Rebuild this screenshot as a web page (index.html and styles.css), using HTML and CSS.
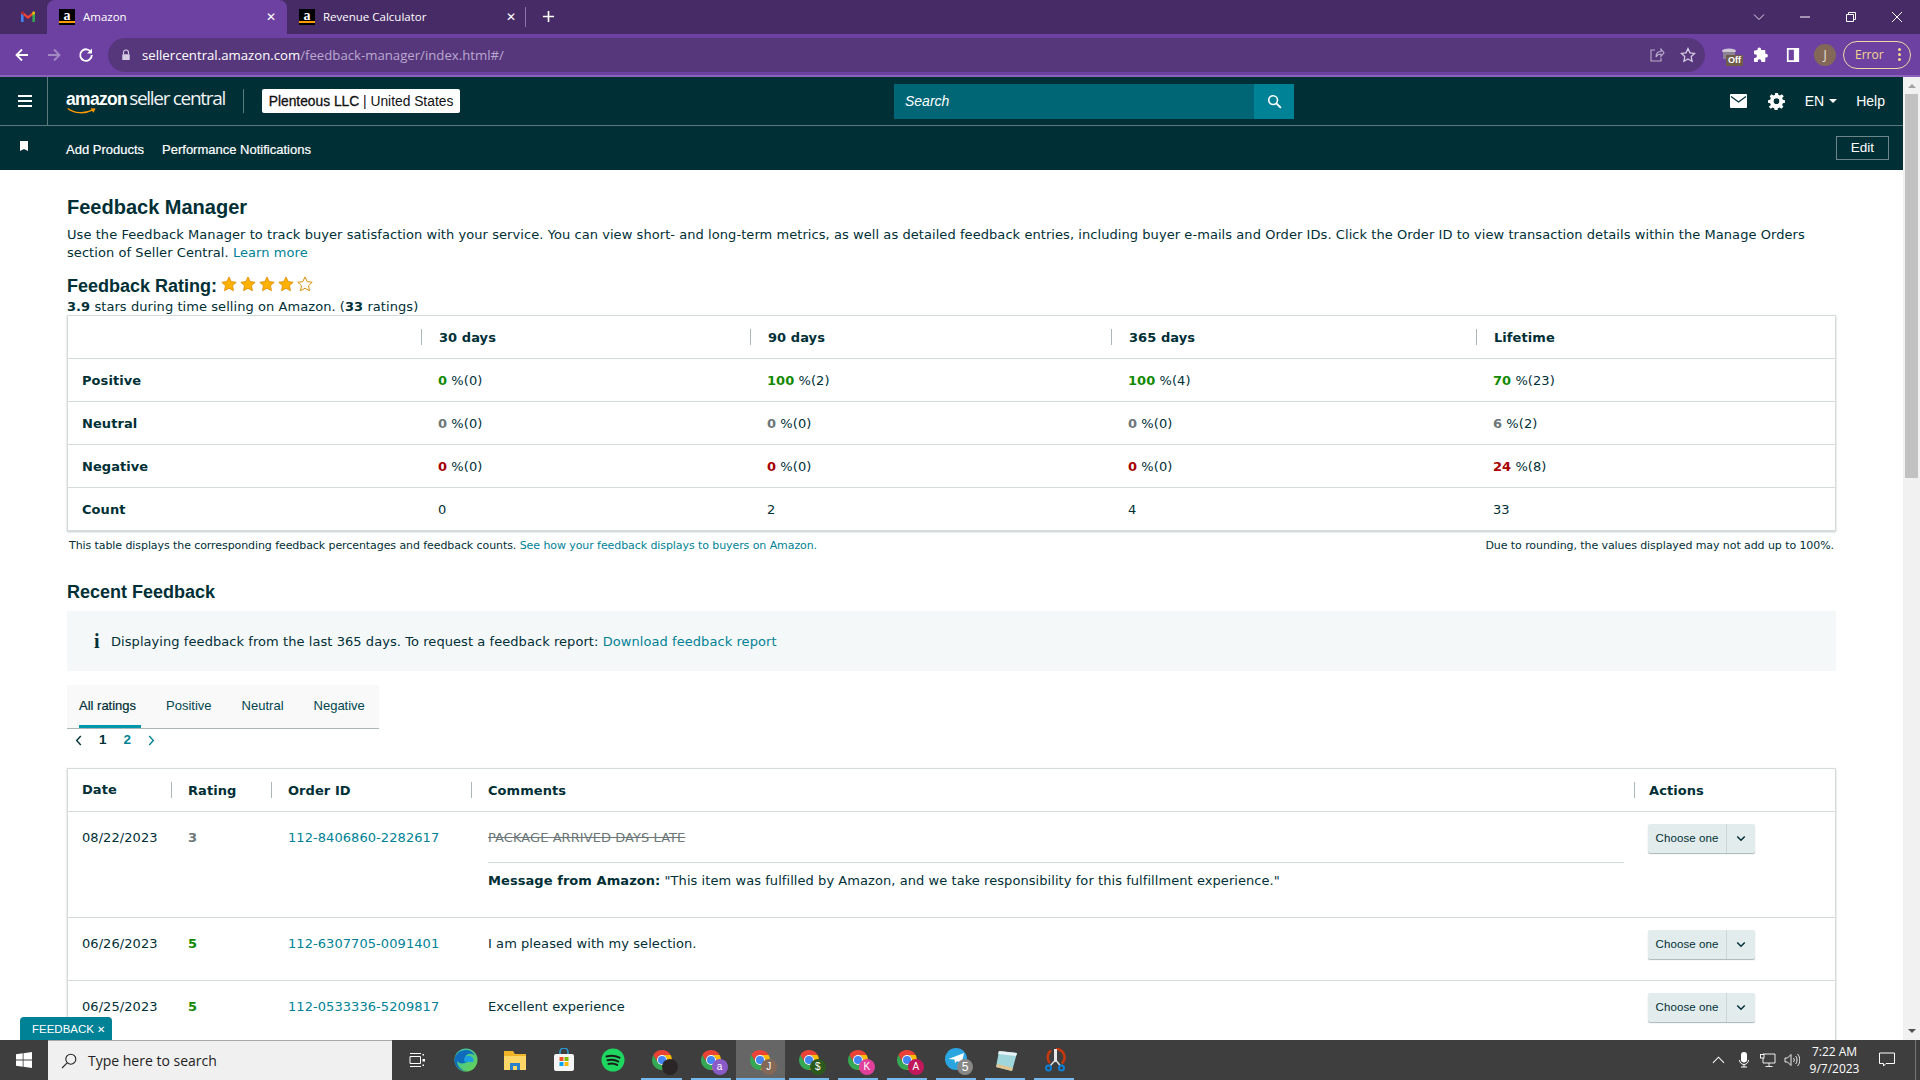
FILE: index.html
```html
<!DOCTYPE html>
<html lang="en">
<head>
<meta charset="utf-8">
<title>Feedback Manager</title>
<link rel="stylesheet" href="styles.css">
</head>
<body>
<svg class="defs" width="0" height="0" aria-hidden="true">
  <symbol id="chrome" viewBox="0 0 24 24">
    <path fill="#ea4335" d="M3.34 7A10 10 0 0 1 20.66 7H12a5 5 0 0 0-4.33 7.5z"/>
    <path fill="#fbbc04" d="M20.66 7A10 10 0 0 1 12 22l4.33-7.5A5 5 0 0 0 12 7z"/>
    <path fill="#34a853" d="M12 22A10 10 0 0 1 3.34 7l4.33 7.5a5 5 0 0 0 8.66 0z"/>
    <circle cx="12" cy="12" r="5" fill="#fff"/>
    <circle cx="12" cy="12" r="4" fill="#4285f4"/>
  </symbol>
  <symbol id="chev" viewBox="0 0 12 8">
    <path d="M1.5 1.5 6 6l4.500-4.500" fill="none" stroke="#002f36" stroke-width="1.8"/>
  </symbol>
  <symbol id="star" viewBox="0 0 20 20">
    <path d="M10 1.2l2.7 5.8 6.3.8-4.6 4.3 1.2 6.3L10 15.3l-5.600 3.100 1.200-6.300L1 7.800 7.300 7z" fill="#ffb100" stroke="#d98a00" stroke-width="1"/>
  </symbol>
  <symbol id="star-empty" viewBox="0 0 20 20">
    <path d="M10 1.2l2.7 5.8 6.3.8-4.6 4.3 1.2 6.3L10 15.3l-5.600 3.100 1.200-6.300L1 7.800 7.300 7z" fill="#fff" stroke="#d98a00" stroke-width="1.2"/>
  </symbol>
</svg>

<header class="tabstrip">
  <div class="tab-pin">
    <svg class="ico16" viewBox="0 0 16 16"><path fill="#4285f4" d="M1 3.500h2.600V13H1.900A.9.900 0 0 1 1 12.100z"/><path fill="#34a853" d="M12.400 3.500H15v8.600a.9.900 0 0 1-.9.900h-1.700z"/><path fill="#ea4335" d="M3.600 3.500 8 7l4.400-3.500v3L8 10 3.600 6.500z"/><path fill="#c5221f" d="M1 3.500c0-1 1.500-1.400 2.600-.6v3.600L1 4.500z"/><path fill="#fbbc04" d="M15 3.500c0-1-1.500-1.400-2.600-.6v3.600L15 4.500z"/></svg>
  </div>
  <div class="tab tab-active">
    <span class="fav">a</span><span class="tab-title">Amazon</span><span class="tab-x">✕</span>
  </div>
  <div class="tab">
    <span class="fav">a</span><span class="tab-title">Revenue Calculator</span><span class="tab-x">✕</span>
  </div>
  <span class="tab-sep"></span>
  <svg class="newtab" viewBox="0 0 14 14"><path d="M7 1v12M1 7h12" stroke="#fff" stroke-width="1.8"/></svg>
  <div class="win-ctl">
    <svg class="ctl" viewBox="0 0 12 12"><path d="M1 3.500 6 8.500l5-5" fill="none" stroke="#e6dcf0" stroke-width="1"/></svg>
    <svg class="ctl" viewBox="0 0 12 12"><path d="M1 6h10" stroke="#fff" stroke-width="1"/></svg>
    <svg class="ctl" viewBox="0 0 12 12"><path d="M1.500 3.500h7v7h-7zM3.500 3.500v-2h7v7h-2" fill="none" stroke="#fff" stroke-width="1"/></svg>
    <svg class="ctl" viewBox="0 0 12 12"><path d="M1 1l10 10M11 1 1 11" stroke="#fff" stroke-width="1"/></svg>
  </div>
</header>

<div class="toolbar">
  <svg class="nav-ico nav-first" viewBox="0 0 16 16"><path d="M14 8H3M8 2.500 2.500 8 8 13.500" fill="none" stroke="#fff" stroke-width="1.8"/></svg>
  <svg class="nav-ico" viewBox="0 0 16 16"><path d="M2 8h11M8 2.500 13.500 8 8 13.500" fill="none" stroke="#a48ac4" stroke-width="1.8"/></svg>
  <svg class="nav-ico" viewBox="0 0 16 16"><path d="M13.200 5.500A5.800 5.800 0 1 0 13.800 8" fill="none" stroke="#fff" stroke-width="1.8"/><path d="M14 1.500v5H9z" fill="#fff"/></svg>
  <div class="omnibox">
    <svg class="lock" viewBox="0 0 12 14"><path d="M3 6V4a3 3 0 0 1 6 0v2" fill="none" stroke="#d6cbe4" stroke-width="1.3"/><rect x="1.500" y="6" width="9" height="7" rx="1" fill="#d6cbe4"/></svg>
    <span class="url"><span class="url-host">sellercentral.amazon.com</span>/feedback-manager/index.html#/</span>
    <svg class="omni-ico omni-share" viewBox="0 0 16 16"><path d="M6 3H2v11h10v-3M7 10c0-4 2-5.500 5-5.500V2l3 3.800-3 3.700V7C9.500 7 8 8 7 10z" fill="none" stroke="#bcaed0" stroke-width="1.1"/></svg>
    <svg class="omni-ico omni-star" viewBox="0 0 16 16"><path d="M8 1.500l2 4.300 4.600.6-3.400 3.200.9 4.600L8 11.900l-4.100 2.300.9-4.600-3.400-3.200L6 5.800z" fill="none" stroke="#d6cbe4" stroke-width="1.3"/></svg>
  </div>
  <div class="ext ext-cap">
    <svg class="ico16" viewBox="0 0 16 16"><ellipse cx="8" cy="4" rx="7" ry="2.500" fill="#cfc7d8"/><path d="M2 5h12v7H2z" fill="#8c8296"/></svg>
    <span class="off">Off</span>
  </div>
  <svg class="ext ext-puzzle" viewBox="0 0 16 16"><path fill="#fff" d="M5.500 3V2.200a1.800 1.800 0 0 1 3.600 0V3h3.400a.8.800 0 0 1 .8.800v3h.7a1.900 1.900 0 0 1 0 3.800h-.7v3.600a.8.800 0 0 1-.8.800H9.300v-1a1.800 1.800 0 0 0-3.600 0v1H2.800a.8.800 0 0 1-.8-.8v-3.200h1a1.900 1.900 0 0 0 0-3.800H2v-3a.8.800 0 0 1 .8-.8z"/></svg>
  <svg class="ext ext-side" viewBox="0 0 14 16"><path fill="#fff" d="M0 0h14v16H0z"/><path fill="#6e42a0" d="M2 2h6v12H2z"/></svg>
  <span class="avatar">J</span>
  <div class="error-pill"><span>Error</span><span class="dots"></span></div>
</div>

<div class="viewport">
  <main class="page">
    <div class="topbar">
      <div class="burger"><span></span><span></span><span></span></div>
      <div class="brand">
        <span class="brand-az">amazon<svg class="smile" viewBox="0 0 42 9"><path d="M1 1c9 7 24 8 35 2" fill="none" stroke="#ff9900" stroke-width="1.8"/><path d="M33 .5l7 .5-3 6z" fill="#ff9900"/></svg></span>
        <span class="brand-sc">seller central</span>
      </div>
      <span class="brand-sep"></span>
      <div class="acct"><b>Plenteous LLC</b> | United States</div>
      <div class="search">
        <span class="search-input">Search</span>
        <span class="search-btn"><svg viewBox="0 0 16 16"><circle cx="6.500" cy="6.500" r="4.700" fill="none" stroke="#fff" stroke-width="1.7"/><path d="M10 10l4.800 4.800" stroke="#fff" stroke-width="2"/></svg></span>
      </div>
      <div class="top-right">
        <svg class="mail" viewBox="0 0 17 14"><rect width="17" height="14" rx="1" fill="#fff"/><path d="M1 2.500 8.500 8 16 2.500" fill="none" stroke="#002f36" stroke-width="1.3"/></svg>
        <svg class="gear" viewBox="0 0 24 24"><path fill="#fff" fill-rule="evenodd" d="M10 1h4l.6 3 2.300 1 2.600-1.700 2.800 2.800L20 8.700l1 2.300 3 .6v3.800l-3 .6-1 2.300 1.700 2.600-2.800 2.800-2.600-1.700-2.300 1-.6 3h-4l-.6-3-2.300-1-2.600 1.700-2.800-2.800L4 18.300 3 16l-3-.6v-3.800l3-.6 1-2.300L2.300 6.100l2.800-2.800L7.700 5 10 4zM12 9a4 4 0 1 0 0 8 4 4 0 0 0 0-8z" transform="translate(0 -1.500)"/></svg>
        <span class="lang">EN<i class="caret"></i></span>
        <span class="help">Help</span>
      </div>
    </div>
    <nav class="subnav">
      <svg class="bookmark" viewBox="0 0 8 10"><path fill="#fff" d="M0 0h8v10L4 8 0 10z"/></svg>
      <a class="subnav-link">Add Products</a>
      <a class="subnav-link">Performance Notifications</a>
      <span class="edit-btn">Edit</span>
    </nav>

    <div class="content">
      <h1 class="title">Feedback Manager</h1>
      <p class="intro">Use the Feedback Manager to track buyer satisfaction with your service. You can view short- and long-term metrics, as well as detailed feedback entries, including buyer e-mails and Order IDs. Click the Order ID to view transaction details within the Manage Orders section of Seller Central. <a class="link">Learn more</a></p>

      <div class="rating-head">
        <span class="rating-title">Feedback Rating:</span>
        <svg class="star"><use href="#star"/></svg><svg class="star"><use href="#star"/></svg><svg class="star"><use href="#star"/></svg><svg class="star"><use href="#star"/></svg><svg class="star"><use href="#star-empty"/></svg>
      </div>
      <p class="rating-sub"><b>3.9</b> stars during time selling on Amazon. (<b>33</b> ratings)</p>

      <div class="card">
        <table class="grid grid-summary">
          <colgroup><col class="c-label"><col class="c-30"><col class="c-90"><col class="c-365"><col class="c-life"></colgroup>
          <thead>
            <tr><th></th><th><span class="th-in">30 days</span></th><th><span class="th-in">90 days</span></th><th><span class="th-in">365 days</span></th><th><span class="th-in">Lifetime</span></th></tr>
          </thead>
          <tbody>
            <tr><td class="lbl">Positive</td><td><b class="pos">0</b> %(0)</td><td><b class="pos">100</b> %(2)</td><td><b class="pos">100</b> %(4)</td><td><b class="pos">70</b> %(23)</td></tr>
            <tr><td class="lbl">Neutral</td><td><b class="neu">0</b> %(0)</td><td><b class="neu">0</b> %(0)</td><td><b class="neu">0</b> %(0)</td><td><b class="neu">6</b> %(2)</td></tr>
            <tr><td class="lbl">Negative</td><td><b class="neg">0</b> %(0)</td><td><b class="neg">0</b> %(0)</td><td><b class="neg">0</b> %(0)</td><td><b class="neg">24</b> %(8)</td></tr>
            <tr><td class="lbl">Count</td><td>0</td><td>2</td><td>4</td><td>33</td></tr>
          </tbody>
        </table>
      </div>
      <div class="note">
        <span>This table displays the corresponding feedback percentages and feedback counts. <a class="link">See how your feedback displays to buyers on Amazon.</a></span>
        <span>Due to rounding, the values displayed may not add up to 100%.</span>
      </div>

      <h2 class="title recent">Recent Feedback</h2>
      <div class="info">
        <span class="info-i">i</span>
        <span>Displaying feedback from the last 365 days. To request a feedback report: <a class="link">Download feedback report</a></span>
      </div>

      <div class="tabs">
        <span class="rtab rtab-on">All ratings</span>
        <span class="rtab">Positive</span>
        <span class="rtab">Neutral</span>
        <span class="rtab">Negative</span>
      </div>
      <div class="pager">
        <svg class="pg-arrow" viewBox="0 0 7 12"><path d="M6 1 1.500 6 6 11" fill="none" stroke="#002f36" stroke-width="1.5"/></svg>
        <span class="pg-num">1</span>
        <span class="pg-num pg-link">2</span>
        <svg class="pg-arrow" viewBox="0 0 7 12"><path d="M1 1l4.500 5L1 11" fill="none" stroke="#008296" stroke-width="1.5"/></svg>
      </div>

      <div class="card card-recent">
        <table class="grid grid-recent">
          <colgroup><col class="r-date"><col class="r-rate"><col class="r-order"><col class="r-comm"><col class="r-act"></colgroup>
          <thead>
            <tr><th class="first">Date</th><th><span class="th-in">Rating</span></th><th><span class="th-in">Order ID</span></th><th><span class="th-in">Comments</span></th><th><span class="th-in">Actions</span></th></tr>
          </thead>
          <tbody>
            <tr>
              <td class="lead">08/22/2023</td><td class="lead"><b class="neu">3</b></td><td class="lead"><a class="link">112-8406860-2282617</a></td>
              <td class="lead">
                <div class="struck">PACKAGE ARRIVED DAYS LATE</div>
                <div class="amazon-msg"><b>Message from Amazon:</b> "This item was fulfilled by Amazon, and we take responsibility for this fulfillment experience."</div>
              </td>
              <td class="act"><div class="choose"><span class="choose-l">Choose one</span><span class="choose-r"><svg class="chev"><use href="#chev"/></svg></span></div></td>
            </tr>
            <tr>
              <td class="lead">06/26/2023</td><td class="lead"><b class="pos">5</b></td><td class="lead"><a class="link">112-6307705-0091401</a></td><td class="lead">I am pleased with my selection.</td>
              <td class="act"><div class="choose"><span class="choose-l">Choose one</span><span class="choose-r"><svg class="chev"><use href="#chev"/></svg></span></div></td>
            </tr>
            <tr>
              <td class="lead">06/25/2023</td><td class="lead"><b class="pos">5</b></td><td class="lead"><a class="link">112-0533336-5209817</a></td><td class="lead">Excellent experience</td>
              <td class="act"><div class="choose"><span class="choose-l">Choose one</span><span class="choose-r"><svg class="chev"><use href="#chev"/></svg></span></div></td>
            </tr>
          </tbody>
        </table>
      </div>
    </div>
  </main>
  <div class="scrollbar">
    <i class="sb-up"></i>
    <div class="sb-track"><div class="sb-thumb"></div></div>
    <i class="sb-down"></i>
  </div>
  <div class="feedback-tab">FEEDBACK <span class="fb-x">✕</span></div>
</div>

<footer class="taskbar">
  <div class="start"><svg viewBox="0 0 16 16"><path fill="#fff" d="M0 2.300 6.700 1.300V7.600H0zM7.500 1.200 16 0V7.600H7.500zM0 8.400H6.700V14.700L0 13.700zM7.500 8.400H16V16L7.500 14.800z"/></svg></div>
  <div class="tb-search">
    <svg class="tb-mag" viewBox="0 0 16 16"><circle cx="9.800" cy="6.200" r="5" fill="none" stroke="#222" stroke-width="1.1"/><path d="M6.200 9.800 1 15" stroke="#222" stroke-width="1.1"/></svg>
    <span>Type here to search</span>
  </div>
  <div class="tb-item"><svg class="tb-ico tb-view" viewBox="0 0 16 16"><path d="M1 4.500h10.500v7H1zM1 1.500h11M1 14.500h11" fill="none" stroke="#fff" stroke-width="1"/><path d="M13.500 2h1.500v1.500h-1.500zM13.500 7h2.500v2.500h-2.500zM13.500 12.500h1.500V14h-1.500z" fill="#fff"/></svg></div>
  <div class="tb-item"><svg class="tb-ico" viewBox="0 0 24 24"><defs><linearGradient id="eg" x1="0" y1="0" x2="1" y2="1"><stop offset="0" stop-color="#35c1b1"/><stop offset="1" stop-color="#6ad34d"/></linearGradient></defs><circle cx="12" cy="12" r="11.500" fill="url(#eg)"/><path d="M.5 12C1 6 6 2 12 2c4 0 7 2 9 5.500-3-2.500-7-2.500-9 0-1.500 2-1 5 1 6.500-3 2-8 2-10-1 0 4 3 9 9 10C6 23 .5 18.500.5 12z" fill="#0f6cbd"/><path d="M10 12c0-3 3-5 6-4 3 1 4 3 3.500 6h-6c-2 1-3.500-.5-3.500-2z" fill="#1b9de2"/></svg></div>
  <div class="tb-item"><svg class="tb-ico" viewBox="0 0 24 24"><path d="M1 3h9l2 3h11v16H1z" fill="#f0b429"/><path d="M1 8h22v14H1z" fill="#ffd767"/><path d="M7 15h10v7H7z" fill="#2a7fc9"/><path d="M10 18h4v4h-4z" fill="#ffd767"/></svg></div>
  <div class="tb-item"><svg class="tb-ico" viewBox="0 0 24 24"><path d="M8 6V4a4 4 0 0 1 8 0v2" fill="none" stroke="#2aa0e0" stroke-width="1.5"/><rect x="2" y="6" width="20" height="17" rx="2" fill="#f5f5f5"/><path fill="#f25022" d="M7.500 9h4v4h-4z"/><path fill="#7fba00" d="M12.500 9h4v4h-4z"/><path fill="#00a4ef" d="M7.500 14h4v4h-4z"/><path fill="#ffb900" d="M12.500 14h4v4h-4z"/></svg></div>
  <div class="tb-item"><svg class="tb-ico" viewBox="0 0 24 24"><circle cx="12" cy="12" r="11.500" fill="#1ed760"/><path d="M5.500 8.500c4-1.200 9-1 13 1.200M6.500 12.300c3.500-1 7.500-.7 10.800 1.200M7.500 15.900c2.800-.8 6-.5 8.600 1" fill="none" stroke="#1b1b1b" stroke-width="2" stroke-linecap="round"/></svg></div>
  <div class="tb-item tb-open"><svg class="tb-ico"><use href="#chrome"/></svg><span class="badge b-photo"></span></div>
  <div class="tb-item tb-open"><svg class="tb-ico"><use href="#chrome"/></svg><span class="badge b-purple">a</span></div>
  <div class="tb-item tb-open tb-active"><svg class="tb-ico"><use href="#chrome"/></svg><span class="badge b-brown">J</span></div>
  <div class="tb-item tb-open"><svg class="tb-ico"><use href="#chrome"/></svg><span class="badge b-green">$</span></div>
  <div class="tb-item tb-open"><svg class="tb-ico"><use href="#chrome"/></svg><span class="badge b-pink">K</span></div>
  <div class="tb-item tb-open"><svg class="tb-ico"><use href="#chrome"/></svg><span class="badge b-crimson">A</span></div>
  <div class="tb-item tb-open"><svg class="tb-ico tb-tele" viewBox="0 0 24 24"><circle cx="11" cy="11" r="11" fill="#2ba5e0"/><path d="M3.500 11 19 5l-2.500 11-4.500-3-2 2-.5-3.500z" fill="#fff"/></svg><span class="badge b-gray">5</span></div>
  <div class="tb-item tb-open"><svg class="tb-ico" viewBox="0 0 24 24"><path d="M5 3l18 2-5 18-16-4z" fill="#9fd6dc"/><path d="M5 3l18 2-1 3L4 6z" fill="#e8f2f4"/><path d="M2 19l16 4 .8-3L3.500 16z" fill="#e2c48f"/></svg></div>
  <div class="tb-item tb-open"><svg class="tb-ico" viewBox="0 0 24 24"><path d="M13 1a8.500 8.500 0 0 1 6 14.500M8 2.500A8.500 8.500 0 0 0 7 15" fill="none" stroke="#c8380f" stroke-width="2.500"/><path d="M12.500 1v13" stroke="#e8e8e8" stroke-width="3"/><path d="M11.500 13 7 18M13.500 13l4 5" stroke="#ddd" stroke-width="1.5"/><circle cx="5.500" cy="20" r="2.500" fill="none" stroke="#0f80d8" stroke-width="2"/><circle cx="18.500" cy="20" r="2.500" fill="none" stroke="#0f80d8" stroke-width="2"/></svg></div>
  <div class="tray">
    <svg class="tray-ico tray-up" viewBox="0 0 14 8"><path d="M1 7l6-6 6 6" fill="none" stroke="#fff" stroke-width="1.1"/></svg>
    <svg class="tray-ico tray-mic" viewBox="0 0 12 16"><rect x="3" y="0" width="6" height="10.500" rx="3" fill="#fff"/><path d="M1.500 8a4.500 4.500 0 0 0 9 0M6 12.500V15M3 15h6" fill="none" stroke="#fff" stroke-width="1"/></svg>
    <svg class="tray-ico tray-net" viewBox="0 0 16 14"><path d="M3 1h12v9H3zM9 10v3M5.500 13.500h7" fill="none" stroke="#fff" stroke-width=".9"/><rect x="0.500" y="1.500" width="3.500" height="3.500" fill="#3e3e3e" stroke="#fff" stroke-width=".9"/></svg>
    <svg class="tray-ico tray-vol" viewBox="0 0 16 14"><path d="M1 5h2.500L7 1.500v11L3.500 9H1zM9.500 5c1 1 1 3 0 4M11.500 3c2 2 2 6 0 8M13.500 1c3 3 3 9 0 12" fill="none" stroke="#fff" stroke-width=".9"/></svg>
    <div class="clock"><span>7:22 AM</span><span>9/7/2023</span></div>
    <svg class="tray-ico tray-note" viewBox="0 0 16 15"><path d="M.5.500h15v10.500H7L4.500 13.500V11H.5z" fill="none" stroke="#fff" stroke-width="1"/></svg>
    <span class="show-desk"></span>
  </div>
</footer>
</body>
</html>
```
FILE: styles.css
```css
* { box-sizing: border-box; }
html, body { margin: 0; height: 100%; overflow: hidden; }
body {
  width: 1920px; height: 1080px; display: flex; flex-direction: column;
  font-family: "DejaVu Sans", Verdana, sans-serif; font-size: 13px; line-height: 18px; letter-spacing: .065px;
  color: #002f36; background: #fff;
}
.defs { position: absolute; }
.ico16 { width: 16px; height: 16px; display: block; }

/* Browser tab strip */
.tabstrip {
  height: 34px; flex: none; display: flex; align-items: flex-end; background: #472b66; letter-spacing: 0;
  font-family: "Open Sans", sans-serif; font-size: 11.5px; color: #fff;
}
.tab-pin { width: 47px; height: 34px; padding: 9px 0 0 20px; }
.tab { width: 240px; height: 34px; display: flex; align-items: center; padding: 0 11px 0 12px; border-radius: 8px 8px 0 0; }
.tab-active { background: #6d41a1; }
.fav {
  width: 16px; height: 16px; flex: none; background: #000; color: #fff; font: bold 14px/13px "Liberation Serif", serif;
  text-align: center; border-bottom: 2px solid #000; box-shadow: inset 0 -2px 0 #f90; margin-right: 8px;
}
.tab-title { flex: 1; white-space: nowrap; }
.tab-x { font-size: 12px; }
.tab-sep { width: 1px; height: 20px; background: #8d75a8; margin: 0 0 7px -2px; }
.newtab { width: 13px; height: 13px; margin: 0 0 11px 16px; }
.win-ctl { margin-left: auto; display: flex; height: 34px; align-items: center; }
.ctl { width: 12px; height: 12px; margin-right: 34px; }
.ctl:last-child { margin-right: 17px; }

/* Browser toolbar */
.toolbar {
  height: 43px; flex: none; display: flex; align-items: center; background: #6d41a1; letter-spacing: 0;
  border-bottom: 2px solid #8a63b9; padding: 0 9px 0 0; font-family: "Open Sans", sans-serif;
}
.nav-ico { width: 16px; height: 16px; margin-left: 16px; flex: none; }
.nav-first { margin-left: 14px; }
.omnibox {
  margin-left: 14px; width: 1599px; height: 34px; border-radius: 17px; background: #56377b; display: flex; align-items: center;
  padding-left: 13px; padding-right: 9px;
}
.lock { width: 10px; height: 12px; flex: none; }
.url { margin-left: 11px; color: #bba8d2; font-size: 13.2px; white-space: nowrap; flex: 1; }
.url-host { color: #fff; }
.omni-ico { width: 16px; height: 16px; flex: none; }
.omni-star { margin-left: 15px; }
.ext { flex: none; }
.ext-cap { position: relative; margin-left: 16px; width: 16px; height: 16px; }
.off {
  position: absolute; left: 5px; top: 8px; background: #6f5d4a; color: #fff; font-size: 9px; line-height: 11px; font-weight: 700;
  padding: 0 2px; border-radius: 1px; font-family: "Liberation Sans", sans-serif;
}
.ext-puzzle { width: 16px; height: 16px; margin-left: 15px; }
.ext-side { width: 14px; height: 14px; margin-left: 18px; }
.avatar {
  width: 22px; height: 22px; border-radius: 50%; background: #836858; color: #e8e0da; margin-left: 14px; font-size: 12px;
  line-height: 22px; text-align: center; flex: none;
}
.error-pill {
  width: 68px; height: 28px; border: 1px solid #f1d8a2; border-radius: 14px; margin-left: 7px; display: flex; align-items: center;
  padding-left: 11px; color: #f5d98e; font-size: 12px; flex: none;
}
.dots {
  width: 3px; height: 3px; border-radius: 50%; background: #f5d98e; box-shadow: 0 -5px 0 #f5d98e, 0 5px 0 #f5d98e; margin-left: 14px;
}

/* Viewport */
.viewport { position: relative; flex: 1; display: flex; min-height: 0; }
.page { width: 1903px; overflow: hidden; }

.topbar {
  height: 49px; background: #002f36; border-bottom: 1px solid #5b7a7d; display: flex; align-items: center; color: #fff; letter-spacing: 0;
  font-family: "Liberation Sans", Arial, sans-serif;
}
.burger { width: 48px; height: 48px; border-right: 1px solid #5b7a7d; display: flex; flex-direction: column; gap: 3px; padding: 18px 0 0 18px; }
.burger span { width: 14px; height: 2px; background: #fff; }
.brand { margin-left: 18px; width: 159px; display: flex; align-items: baseline; white-space: nowrap; height: 30px; margin-top: -2px; }
.brand-az { position: relative; font: bold 17.5px/26px "Liberation Sans", sans-serif; letter-spacing: -.7px; width: 65px; }
.smile { position: absolute; left: 1px; top: 21px; width: 30px; height: 8px; }
.brand-sc { font: 19px/26px "Open Sans", sans-serif; letter-spacing: -1.3px; color: #f2f2f2; }
.brand-sep { width: 1px; height: 24px; background: #5b7a7d; margin-left: 18px; }
.acct {
  margin-left: 18px; width: 198px; height: 24px; background: #fff; border-radius: 2px; color: #111; font-size: 13.8px; line-height: 25px; text-align: center;
  white-space: nowrap;
}
.acct b { font-weight: 400; -webkit-text-stroke: .3px #111; }
.search { margin-left: 434px; width: 400px; height: 35px; display: flex; background: #006574; }
.search-input { flex: 1; padding-left: 11px; font-style: italic; line-height: 35px; font-size: 14px; color: #fff; }
.search-btn { width: 40px; background: #008296; display: flex; align-items: center; justify-content: center; }
.search-btn svg { width: 15px; height: 15px; }
.top-right { margin-left: auto; display: flex; align-items: center; padding-right: 18px; font-size: 14px; }
.mail { width: 17px; height: 14px; }
.gear { width: 17px; height: 17px; margin-left: 21px; }
.lang { margin-left: 20px; display: flex; align-items: center; }
.caret { width: 0; height: 0; border: 4px solid transparent; border-top-color: #fff; border-bottom: 0; margin-left: 5px; }
.help { margin-left: 19px; }

.subnav {
  height: 44px; background: #002f36; display: flex; align-items: center; color: #fff; padding: 0 14px 0 20px; letter-spacing: 0;
  font-family: "Liberation Sans", Arial, sans-serif; font-size: 13px;
}
.bookmark { width: 8px; height: 10px; margin: -4px 38px 0 0; }
.subnav-link { margin-right: 18px; padding-top: 3px; -webkit-text-stroke: .2px #fff; }
.edit-btn { margin-left: auto; width: 53px; height: 24px; border: 1px solid #6c8689; text-align: center; line-height: 22px; font-size: 13.5px; }

.content { padding: 25px 67px 0; }
.title { margin: 0; font: bold 20px/24px "Liberation Sans", Arial, sans-serif; letter-spacing: 0; color: #002f36; }
.intro { margin: 7px 0 13px; }
.link { color: #008296; }
.rating-head { height: 22px; display: flex; align-items: center; gap: 3px; }
.rating-title { font: bold 18px/22px "Liberation Sans", Arial, sans-serif; letter-spacing: 0; margin-right: 1px; }
.star { width: 16px; height: 16px; margin-top: -5px; }
.rating-sub { margin: 1px 0 -1px; }

.card { border: 1px solid #d5dbdb; box-shadow: 0 1px 2px rgba(0,47,54,.25); }
.grid { width: 100%; border-collapse: separate; border-spacing: 0; table-layout: fixed; }
.grid th { height: 43px; padding: 0; text-align: left; font-weight: 700; border-bottom: 1px solid #d5dbdb; }
.grid td { height: 43px; padding: 2px 0 0 17px; border-bottom: 1px solid #d5dbdb; }
.grid tr:last-child td { border-bottom: 0; height: 42px; }
.th-in { display: block; height: 16px; line-height: 18px; border-left: 1px solid #a9b7b8; padding-left: 17px; }
.grid-recent .th-in { padding-left: 16px; }
.grid-recent th:last-child .th-in { padding-left: 14px; }
.grid-summary td.lbl { padding-left: 14px; font-weight: 700; }
.c-label { width: 353px; } .c-30 { width: 329px; } .c-90 { width: 361px; } .c-365 { width: 365px; } .c-life { width: 359px; }
.pos { color: #128a00; } .neu { color: #6c7778; } .neg { color: #a80000; }

.note { display: flex; justify-content: space-between; font-size: 11px; line-height: 16px; letter-spacing: -.08px; margin-top: 7px; padding: 0 2px; }
.recent { margin-top: 26px; font-size: 18px; }
.info { margin-top: 7px; height: 60px; background: #f5f8f9; display: flex; align-items: center; padding-left: 27px; }
.info > span:last-child { padding-top: 1px; }
.info-i { width: 17px; font: bold 20px/20px "Liberation Serif", serif; color: #002f36; }
.tabs { margin-top: 14px; width: 312px; height: 44px; background: #f9f9f9; border-bottom: 1px solid #aab7b8; display: flex; padding-left: 12px; gap: 30px; font: 13px/18px "Liberation Sans", Arial, sans-serif; letter-spacing: 0; color: #00464f; }
.rtab { padding-top: 12px; height: 43px; border-bottom: 3px solid transparent; }
.rtab-on { padding: 12px 5px 0 0; margin-right: -5px; color: #002f36; border-bottom-color: #0097ac; -webkit-text-stroke: .2px #002f36; }
.pager { height: 22px; display: flex; align-items: center; padding-left: 8px; font: bold 13.5px/18px "Liberation Sans", Arial, sans-serif; letter-spacing: 0; }
.pg-arrow { width: 7px; height: 11px; }
.pg-num { margin-left: 17px; }
.pg-link { color: #008296; margin-left: 17px; }
.pg-num + .pg-arrow { margin-left: 17px; }
.card-recent { margin-top: 17px; }
.grid-recent th.first { padding-left: 14px; }
.r-date { width: 103px; } .r-rate { width: 100px; } .r-order { width: 200px; } .r-comm { width: 1163px; } .r-act { width: 201px; }
.grid-recent td.lead { vertical-align: top; padding: 17px 10px 0 0; }
.grid-recent td.lead:first-child { padding-left: 14px; }
.grid-recent td.lead:nth-child(2), .grid-recent td.lead:nth-child(3), .grid-recent td.lead:nth-child(4) { padding-left: 17px; }
.grid-recent td.act { vertical-align: top; padding: 12px 0 21px 14px; }
.struck { color: #6c7778; text-decoration: line-through; padding-bottom: 15px; border-bottom: 1px solid #d5dbdb; }
.amazon-msg { margin-top: 9px; height: 45px; }
.choose {
  width: 107px; height: 29px; display: flex; background: #e3ecec; border-radius: 2px; box-shadow: 0 1px 1px rgba(0,47,54,.35);
  font: 11.5px/29px "Liberation Sans", Arial, sans-serif; letter-spacing: .1px;
}
.choose-l { width: 79px; text-align: center; border-right: 1px solid #cdd6d6; }
.choose-r { flex: 1; display: flex; align-items: center; justify-content: center; }
.chev { width: 10px; height: 7px; }

/* Scrollbar */
.scrollbar { width: 17px; background: #f1f1f1; display: flex; flex-direction: column; align-items: center; }
.sb-up, .sb-down { width: 0; height: 0; border: 4px solid transparent; flex: none; }
.sb-up { border-bottom: 4px solid #a3a3a3; border-top: 0; margin: 7px 0 6px; }
.sb-down { border-top: 4px solid #505050; border-bottom: 0; margin: 6px 0 7px; }
.sb-track { flex: 1; width: 100%; padding: 0 2px; }
.sb-thumb { height: 384px; background: #c1c1c1; }

.feedback-tab {
  position: absolute; left: 20px; bottom: 0; width: 92px; height: 23px; background: #008296; color: #fff; border-radius: 4px 4px 0 0;
  font: 11.5px/25px "Liberation Sans", Arial, sans-serif; letter-spacing: 0; padding-left: 12px; white-space: nowrap;
}
.fb-x { font-size: 10px; }

/* Taskbar */
.taskbar {
  height: 40px; flex: none; background: #3e3e3e; display: flex; align-items: stretch; color: #fff; letter-spacing: 0;
  font-family: "Open Sans", sans-serif;
}
.start { width: 48px; display: flex; align-items: center; justify-content: center; }
.start svg { width: 16px; height: 16px; }
.tb-search { width: 344px; background: #f0f0f0; border-top: 1px solid #a8a8a8; color: #222; display: flex; align-items: center; padding-left: 13px; font-size: 14px; }
.tb-mag { width: 16px; height: 16px; margin-right: 11px; }
.tb-item { position: relative; width: 49.1px; display: flex; align-items: center; justify-content: center; }
.tb-ico { width: 24px; height: 24px; }
.tb-view { width: 16px; height: 16px; }
.tb-open::after { content: ""; position: absolute; left: 4px; right: 5px; bottom: 0; height: 2px; background: #76b9ed; }
.tb-active { background: #666; }
.tb-active::after { left: 0; right: 0; }
.badge {
  position: absolute; left: 25px; top: 19px; width: 16px; height: 16px; border-radius: 50%; font: 10px/16px "Liberation Sans", sans-serif;
  text-align: center; color: #fff;
}
.b-photo { background: #2b2527; } .b-purple { background: #8a5ac9; } .b-brown { background: #836858; } .b-green { background: #2c5a1c; }
.b-pink { background: #e0409a; } .b-crimson { background: #c2185b; } .b-gray { background: #888; font-size: 12px; }
.tray { margin-left: auto; display: flex; align-items: center; }
.tray-ico { width: 12px; height: 16px; }
.tray-up { width: 13px; margin-right: 13px; }
.tray-mic { margin-right: 10px; }
.tray-net { width: 16px; margin-right: 8px; }
.tray-vol { width: 16px; margin-right: 7px; }
.tray-note { width: 16px; margin: 0 20px 0 17px; }
.clock { width: 55px; display: flex; flex-direction: column; align-items: center; font-size: 12px; line-height: 17px; color: #fff; }
.show-desk { width: 1px; height: 40px; background: #777; margin-right: 4px; }
```
